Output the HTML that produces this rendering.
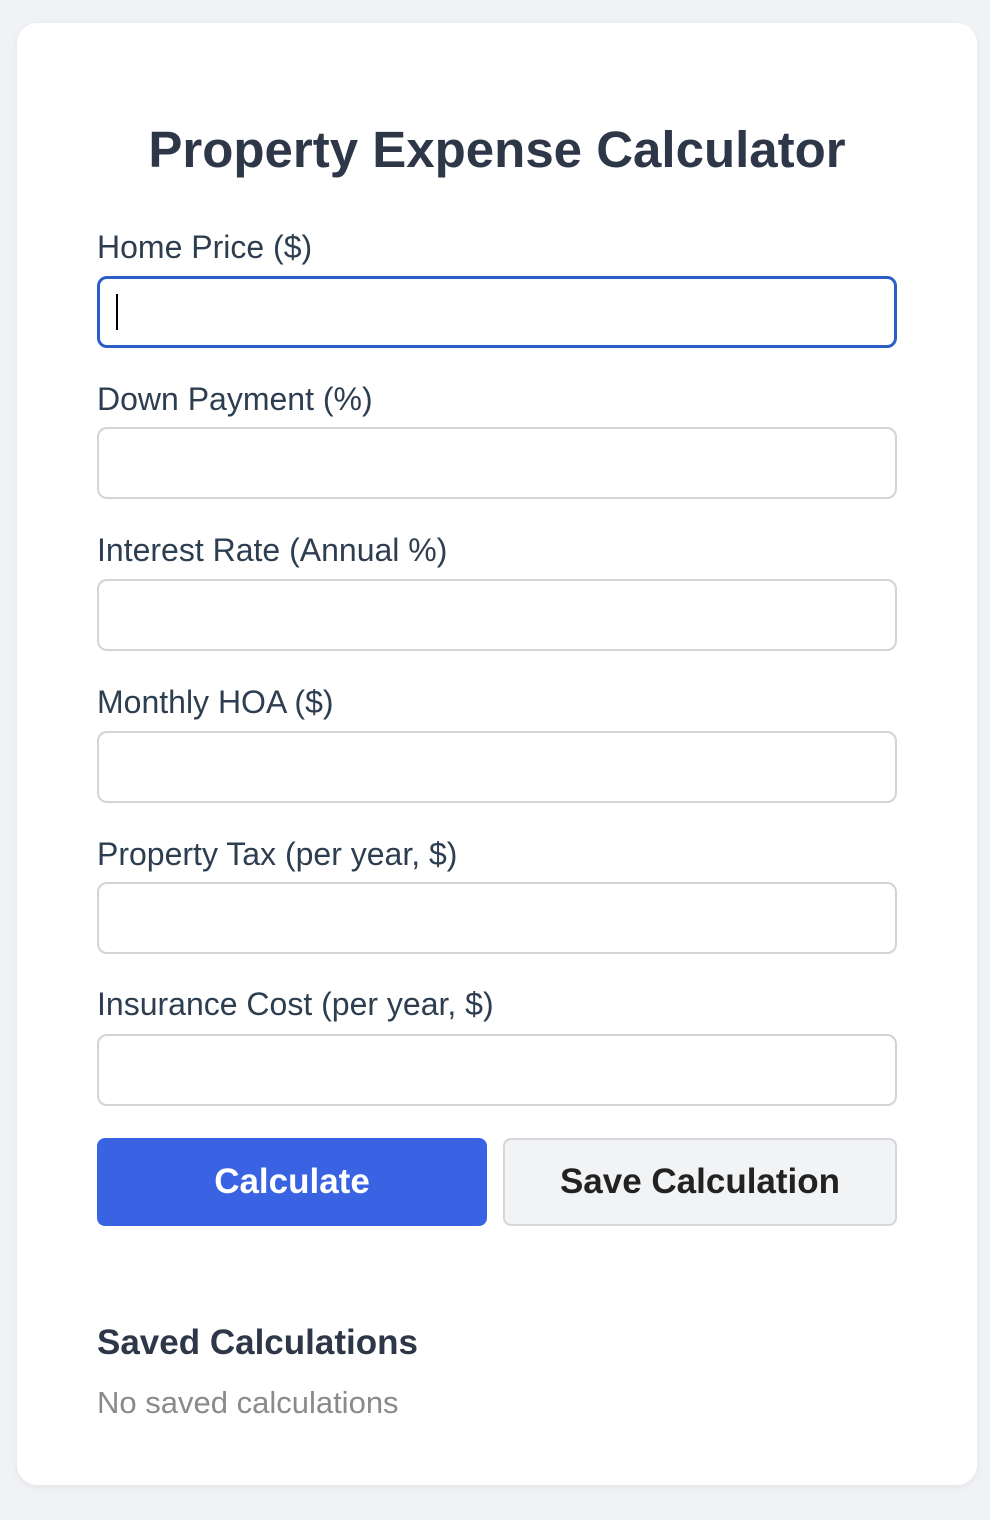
<!DOCTYPE html>
<html><head><style>
*{margin:0;padding:0;box-sizing:border-box}
body{width:990px;height:1520px;background:#f0f2f5;font-family:"Liberation Sans",Arial,sans-serif;position:relative;overflow:hidden}
.card{position:absolute;left:17px;top:23px;width:960px;height:1462px;background:#fff;border-radius:20px;box-shadow:0 2px 8px rgba(0,0,0,0.06)}
.t{position:absolute;left:0;width:994px;text-align:center;top:119px;font-size:51px;font-weight:bold;color:#2d3748;line-height:62px}
.l{position:absolute;left:97px;font-size:32px;color:#2d3e50;line-height:38px}
.i{position:absolute;left:97px;width:800px;height:72px;border:2px solid #d4d4d4;border-radius:10px;background:#fff}
.f{border:3px solid #2a5fc9}
.cur{position:absolute;left:16px;top:15px;width:2px;height:36px;background:#000}
.b{position:absolute;top:1138px;height:88px;border-radius:8px;font-size:35px;font-weight:bold;text-align:center;line-height:88px}
</style></head><body>
<div class="card"></div>
<div class="t">Property Expense Calculator</div>
<div class="l" style="top:228px">Home Price ($)</div>
<div class="i f" style="top:276px"><div class="cur"></div></div>
<div class="l" style="top:380px">Down Payment (%)</div>
<div class="i" style="top:427px"></div>
<div class="l" style="top:531px">Interest Rate (Annual %)</div>
<div class="i" style="top:579px"></div>
<div class="l" style="top:683px">Monthly HOA ($)</div>
<div class="i" style="top:731px"></div>
<div class="l" style="top:835px">Property Tax (per year, $)</div>
<div class="i" style="top:882px"></div>
<div class="l" style="top:985px">Insurance Cost (per year, $)</div>
<div class="i" style="top:1034px"></div>
<div class="b" style="left:97px;width:390px;background:#3a63e3;color:#fff">Calculate</div>
<div class="b" style="left:503px;width:394px;background:#f2f3f5;border:2px solid #d5d7db;color:#222;line-height:84px">Save Calculation</div>
<div style="position:absolute;left:97px;top:1322px;font-size:35px;font-weight:bold;color:#2d3748;line-height:42px">Saved Calculations</div>
<div style="position:absolute;left:97px;top:1384px;font-size:31px;color:#8a8a8a;line-height:37px">No saved calculations</div>
</body></html>
